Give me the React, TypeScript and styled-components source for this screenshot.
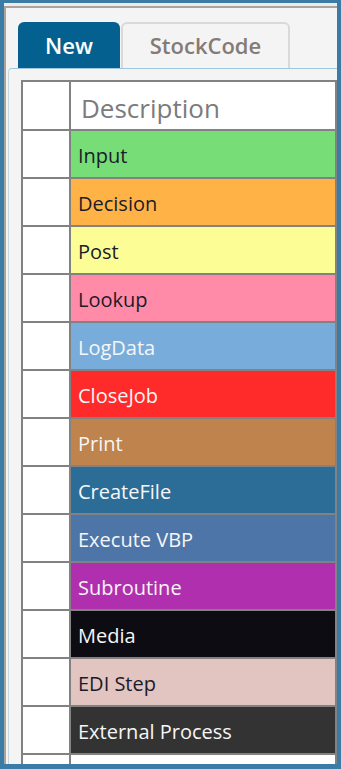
import styled, { createGlobalStyle } from "styled-components";

const GlobalStyle = createGlobalStyle`
    html, body {
        margin: 0;
        padding: 0;
        background: #3a7ca6;
        height: 769px;
        overflow: hidden;
    }
`

type Step = {
    name: string;
    bg: string;
    light?: boolean;
}

const steps: Step[] = [
    { name: "Input", bg: "#77dd77" },
    { name: "Decision", bg: "#ffb347" },
    { name: "Post", bg: "#fdfd96" },
    { name: "Lookup", bg: "#ff8ba8" },
    { name: "LogData", bg: "#78addb", light: true },
    { name: "CloseJob", bg: "#ff2a2a", light: true },
    { name: "Print", bg: "#bf834e", light: true },
    { name: "CreateFile", bg: "#2b6d97", light: true },
    { name: "Execute VBP", bg: "#4d75a7", light: true },
    { name: "Subroutine", bg: "#b02fae", light: true },
    { name: "Media", bg: "#0c0c12", light: true },
    { name: "EDI Step", bg: "#e2c4c0" },
    { name: "External Process", bg: "#333333", light: true },
]

const App = () => {
    return (
        <>
            <GlobalStyle />
            <Frame>
                <Chrome>
                    <TabBar>
                        <Tab $active>New</Tab>
                        <Tab>StockCode</Tab>
                    </TabBar>
                    <Panel>
                        <Grid>
                            <HeaderRow>
                                <SelectCell />
                                <HeaderCell>Description</HeaderCell>
                            </HeaderRow>
                            {steps.map((step) => (
                                <Row key={step.name}>
                                    <SelectCell />
                                    <StepCell $bg={step.bg} $light={step.light}>{step.name}</StepCell>
                                </Row>
                            ))}
                            <Row>
                                <SelectCell />
                                <EmptyCell />
                            </Row>
                        </Grid>
                    </Panel>
                </Chrome>
            </Frame>
        </>
    )
}

export default App;

const Frame = styled.div`
    margin: 3px 0 0 4px;
    width: 333px;
    height: 761px;
    border-top: 3px solid #ececec;
    box-sizing: border-box;
    overflow: hidden;
    background: #f4f4f4;
`

const Chrome = styled.div`
    height: 100%;
    box-sizing: border-box;
    border-top: 2px solid #aaa59c;
    border-left: 2px solid #aaa59c;
    display: flex;
    flex-direction: column;
    font-family: "Open Sans", "Noto Sans", sans-serif;
`

const TabBar = styled.div`
    display: flex;
    gap: 1px;
    padding: 14px 0 0 12px;
    height: 46px;
`

const Tab = styled.div<{ $active?: boolean }>`
    display: flex;
    align-items: center;
    justify-content: center;
    box-sizing: border-box;
    height: 46px;
    width: ${(p) => (p.$active ? "102px" : "169px")};
    border-radius: 6px 6px 0 0;
    font-size: 22px;
    font-weight: 600;
    padding-bottom: 3px;
    background: ${(p) => (p.$active ? "#04618f" : "#f4f4f4")};
    color: ${(p) => (p.$active ? "#ffffff" : "#857b76")};
    border: 2px solid ${(p) => (p.$active ? "#04618f" : "#d9d9d9")};
    border-bottom: none;
    position: relative;
    z-index: 1;
`

const Panel = styled.div`
    flex: 1;
    margin-left: 2px;
    border-top: 1px solid #9fc6dc;
    border-left: 1px solid #c9d5dd;
    border-top-left-radius: 4px;
    padding: 11px 0 0 12px;
    min-height: 0;
    overflow: hidden;
`

const Grid = styled.div`
    border: 2px solid #828282;
    border-bottom: none;
    background: #ffffff;
    display: flex;
    flex-direction: column;
`

const Row = styled.div`
    display: flex;
    height: 48px;
    box-sizing: border-box;
    border-bottom: 2px solid #828282;
`

const HeaderRow = styled(Row)`
    height: 49px;
`

const SelectCell = styled.div`
    width: 46px;
    flex: none;
    background: #ffffff;
    border-right: 2px solid #828282;
`

const HeaderCell = styled.div`
    flex: 1;
    display: flex;
    align-items: center;
    padding: 4px 0 0 10px;
    font-size: 26px;
    color: #7b7b7b;
`

const StepCell = styled.div<{ $bg: string; $light?: boolean }>`
    flex: 1;
    display: flex;
    align-items: center;
    padding: 3px 0 0 7px;
    font-size: 20px;
    background: ${(p) => p.$bg};
    color: ${(p) => (p.$light ? "#f6f6f6" : "#1b1b2a")};
    white-space: nowrap;
`

const EmptyCell = styled.div`
    flex: 1;
    background: #ffffff;
`
